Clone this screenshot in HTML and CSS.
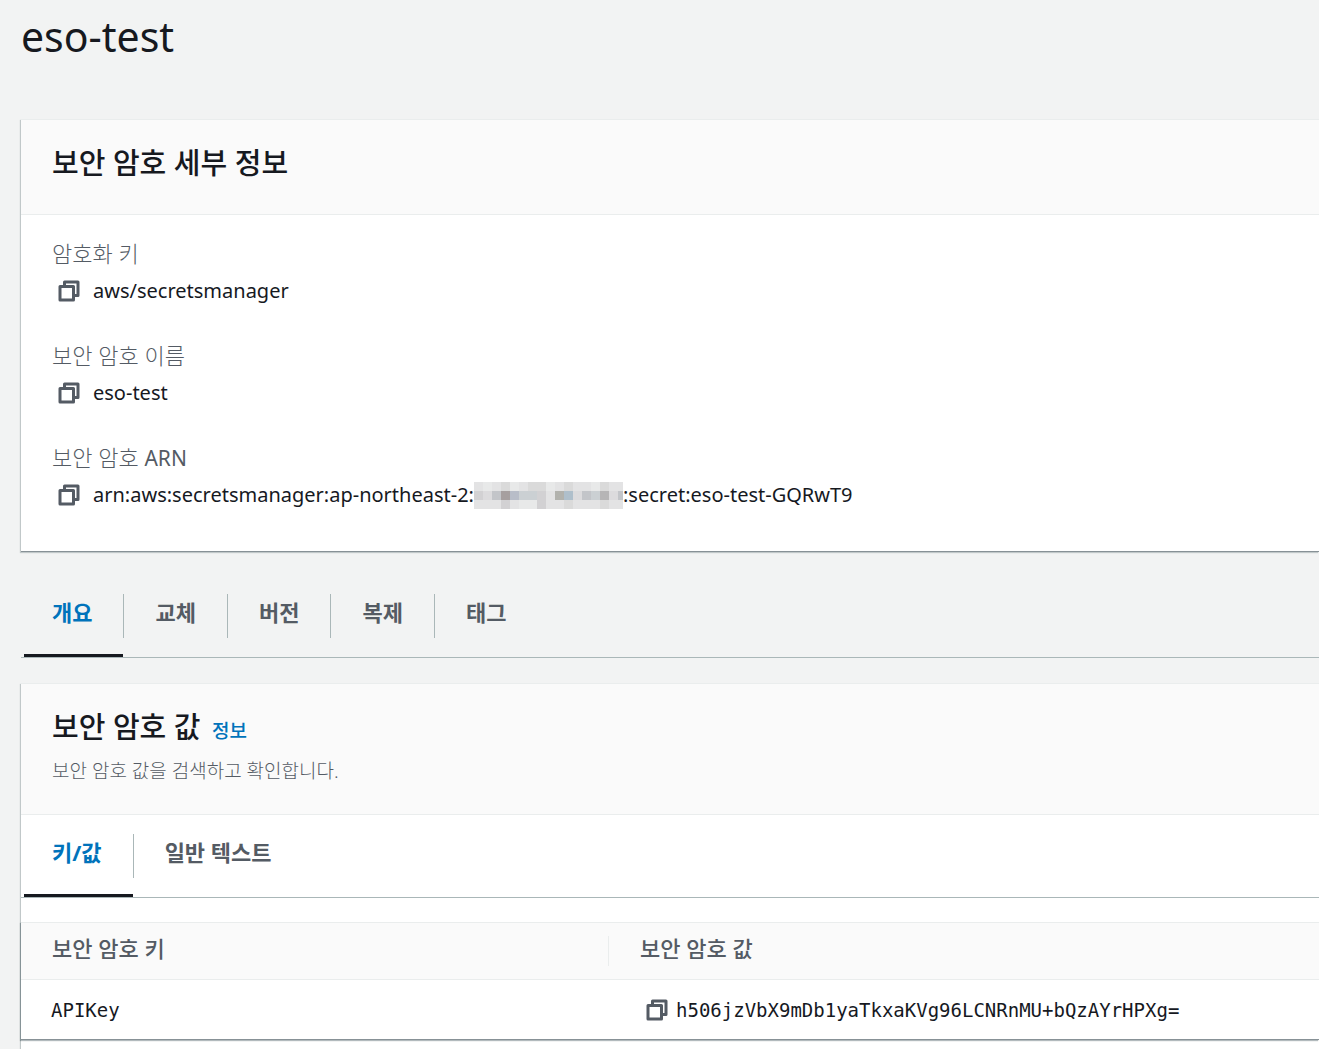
FILE: index.html
```html
<!DOCTYPE html>
<html lang="ko">
<head>
    <meta charset="UTF-8">
    <meta name="viewport" content="width=device-width, initial-scale=1.0">
    <title>eso-test</title>
    <link rel="stylesheet" href="styles.css">
</head>
<body>
    <svg class="sprite" aria-hidden="true">
        <symbol id="copy" viewBox="0 0 22 22">
            <path d="M6.5 6V2h13.5v13.5h-4" />
            <path d="M2 6.5h13.5V20H2z" />
        </symbol>
    </svg>

    <main class="page">
        <h1>eso-test</h1>

        <section class="card details">
            <header class="card-header">
                <h2>보안 암호 세부 정보</h2>
            </header>
            <dl class="fields">
                <div class="field">
                    <dt>암호화 키</dt>
                    <dd><button class="copy" aria-label="복사"><svg><use href="#copy" /></svg></button>aws/secretsmanager</dd>
                </div>
                <div class="field">
                    <dt>보안 암호 이름</dt>
                    <dd><button class="copy" aria-label="복사"><svg><use href="#copy" /></svg></button>eso-test</dd>
                </div>
                <div class="field">
                    <dt>보안 암호 <abbr>ARN</abbr></dt>
                    <dd>
                        <button class="copy" aria-label="복사"><svg><use href="#copy" /></svg></button>
                        <span>arn:aws:secretsmanager:ap-northeast-2:</span>
                        <svg class="masked" viewBox="0 0 149 27" shape-rendering="crispEdges" aria-hidden="true">
                            <path fill="#e3e3e4" d="M0 0h149v27H0z" />
                            <path fill="#e8e9e9" d="M9 0h9v9H9zM36 0h9v9h-9zM72 0h9v9h-9zM117 0h9v9h-9zM45 18h18v9H45z" />
                            <path fill="#dadada" d="M27 0h9v9h-9zM54 0h18v9H54zM90 0h9v9h-9zM126 0h9v9h-9zM90 18h9v9h-9zM126 18h9v9h-9z" />
                            <path fill="#d2d1d3" d="M0 9h9v9H0zM27 18h9v9h-9zM63 9h9v18h-9z" />
                            <path fill="#c3c5c9" d="M18 9h9v9h-9zM108 9h9v9h-9zM144 9h5v9h-5z" />
                            <path fill="#a69f9f" d="M27 9h9v9h-9z" />
                            <path fill="#b8bdc8" d="M36 9h9v9h-9z" />
                            <path fill="#cbd0d3" d="M45 9h18v9H45zM117 9h9v9h-9z" />
                            <path fill="#b2b2ad" d="M81 9h9v9h-9z" />
                            <path fill="#afbfcb" d="M90 9h9v9h-9z" />
                            <path fill="#dcdbdd" d="M9 9h9v9H9zM99 9h9v9h-9zM135 9h9v9h-9z" />
                            <path fill="#b6b5b6" d="M126 9h9v9h-9z" />
                        </svg>
                        <span>:secret:eso-test-GQRwT9</span>
                    </dd>
                </div>
            </dl>
        </section>

        <nav class="tabs">
            <button class="tab active"><span>개요</span></button>
            <button class="tab"><span>교체</span></button>
            <button class="tab"><span>버전</span></button>
            <button class="tab"><span>복제</span></button>
            <button class="tab"><span>태그</span></button>
        </nav>

        <section class="card values">
            <header class="card-header">
                <h2>보안 암호 값 <a href="#info">정보</a></h2>
                <p>보안 암호 값을 검색하고 확인합니다.</p>
            </header>
            <div class="tabs inner">
                <button class="tab active"><span>키/값</span></button>
                <button class="tab"><span>일반 텍스트</span></button>
            </div>
            <table>
                <thead>
                    <tr>
                        <th class="key"><div>보안 암호 키</div></th>
                        <th><div>보안 암호 값</div></th>
                    </tr>
                </thead>
                <tbody>
                    <tr>
                        <td>APIKey</td>
                        <td><div class="value"><button class="copy" aria-label="복사"><svg><use href="#copy" /></svg></button>h506jzVbX9mDb1yaTkxaKVg96LCNRnMU+bQzAYrHPXg=</div></td>
                    </tr>
                </tbody>
            </table>
        </section>
    </main>
</body>
</html>
```

FILE: styles.css
```css
* { box-sizing: border-box; }
body { margin: 0; background: #f2f3f3; color: #16191f; font: 20px/30px "Noto Sans", "Noto Sans CJK KR", sans-serif; }
h1, h2, p, dl, dd { margin: 0; }
button { padding: 0; border: 0; background: none; color: inherit; font: inherit; cursor: pointer; }
.sprite { display: none; }

.page { display: flex; flex-direction: column; min-height: 100vh; padding: 11px 0 0 21px; }
h1 { margin-bottom: 58px; font-size: 41px; line-height: 50px; font-weight: 400; }
h2 { font-size: 29px; line-height: 36px; font-weight: 500; }

/* cards */
.card { background: #fff; border-top: 1px solid #eaeded; box-shadow: -1px 1px 1px 0 rgba(0, 28, 36, 0.2); }
.card-header { padding: 25px 31px 33px; background: #fafafa; border-bottom: 1px solid #eaeded; }
.details { border-bottom: 1px solid #879196; }

.fields { display: flex; flex-direction: column; gap: 31px; padding: 23px 31px 38px; }
dt { height: 35px; color: #545b64; font-size: 22px; font-weight: 300; }
dt abbr { font-size: 21px; font-weight: 400; }
dd { display: flex; align-items: center; height: 36px; }
.copy { display: flex; margin: 0 13px 0 6px; color: #545b64; }
.copy svg { width: 22px; height: 22px; fill: none; stroke: currentColor; stroke-width: 3; stroke-linejoin: round; }
.masked { width: 149px; height: 27px; }

/* tabs */
.tabs { display: flex; margin: 42px 0 25px; border-bottom: 1px solid #aab7b8; }
.tab { position: relative; height: 63px; padding-bottom: 19px; color: #545b64; font-size: 22px; font-weight: 700; line-height: 36px; }
.tab span { display: block; height: 44px; padding: 0 31px; border-right: 1px solid #aab7b8; }
.tab:last-child span { border-right: 0; }
.tab.active { color: #0073bb; }
.tab.active::after { content: ""; position: absolute; left: 3px; right: 1px; bottom: 0; height: 3px; background: #16191f; }
.tabs.inner { margin: 19px 0 24px; }

/* secret value */
.values { flex: 1; }
.values .card-header { padding-bottom: 29px; }
.values p { padding-top: 8px; color: #545b64; font-size: 19px; font-weight: 300; line-height: 28px; }
.values h2 a { margin-left: 4px; color: #0073bb; font-size: 19px; text-decoration: none; }

table { width: 100%; border-collapse: collapse; table-layout: fixed; box-shadow: -1px 1px 1px 0 rgba(0, 28, 36, 0.3); }
thead { background: #fafafa; border-top: 1px solid #eaeded; border-bottom: 1px solid #eaeded; }
tbody { border-bottom: 1px solid #879196; }
th { height: 57px; padding: 0; color: #545b64; text-align: left; font-size: 22px; font-weight: 500; }
th.key { width: 588px; }
th div { height: 30px; padding-left: 31px; line-height: 24px; }
th.key div { border-right: 1px solid #eaeded; }
td { height: 60px; padding: 0 30px; font: 19px/30px "DejaVu Sans Mono", monospace; }
td + td { padding-left: 31px; }
.value { display: flex; align-items: center; }
.value .copy { margin-right: 8px; }
```
